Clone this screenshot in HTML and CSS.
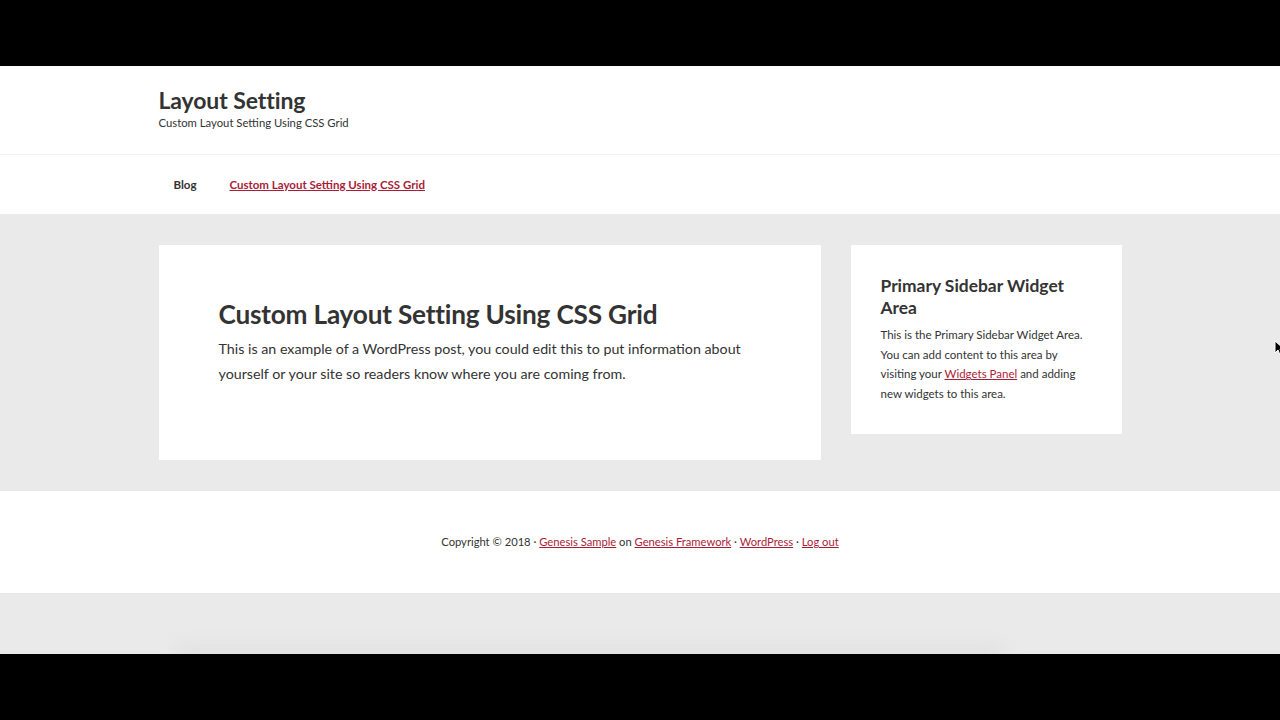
FILE: index.html
```html
<!DOCTYPE html>
<html lang="en">
<head>
<meta charset="utf-8">
<title>Layout Setting</title>
<link rel="stylesheet" href="styles.css">
</head>
<body>
<div class="video">
  <header class="site-header">
    <div class="wrap">
      <p class="site-title">Layout Setting</p>
      <p class="site-description">Custom Layout Setting Using CSS Grid</p>
    </div>
  </header>
  <nav class="nav-primary">
    <ul class="wrap menu">
      <li><a class="menu-link" href="#">Blog</a></li>
      <li><a class="menu-link current" href="#">Custom Layout Setting Using CSS Grid</a></li>
    </ul>
  </nav>
  <div class="site-inner">
    <div class="wrap content-sidebar">
      <main class="entry">
        <h1 class="entry-title">Custom Layout Setting Using CSS Grid</h1>
        <p class="entry-content">This is an example of a WordPress post, you could edit this to put information about yourself or your site so readers know where you are coming from.</p>
      </main>
      <aside class="sidebar">
        <h3 class="widget-title">Primary Sidebar Widget Area</h3>
        <p class="widget-text">This is the Primary Sidebar Widget Area. You can add content to this area by visiting your <a href="#">Widgets Panel</a> and adding new widgets to this area.</p>
      </aside>
    </div>
  </div>
  <footer class="site-footer">
    <p>Copyright © 2018 · <a href="#">Genesis Sample</a> on <a href="#">Genesis Framework</a> · <a href="#">WordPress</a> · <a href="#">Log out</a></p>
  </footer>
  <div class="below">
    <div class="shadow-band"></div>
  </div>
  <svg class="cursor" width="10" height="16" viewBox="0 0 10 16"><path d="M1 1 L1 13 L4 10 L6 15 L8 14 L6 9 L10 9 Z" fill="#000" stroke="#fff" stroke-width="1"/></svg>
</div>
</body>
</html>
```

FILE: styles.css
```css
* { box-sizing: border-box; }
html, body { margin: 0; padding: 0; }
body {
  background: #000;
  width: 1280px;
  height: 720px;
  overflow: hidden;
  font-family: "Lato", "Liberation Sans", sans-serif;
  color: #333;
}
.video {
  position: relative;
  margin-top: 66px;
  height: 588px;
  background: #eaeaea;
  display: flex;
  flex-direction: column;
  overflow: hidden;
}
.wrap {
  width: 963px;
  margin: 0 auto;
}
p { margin: 0; }
a { color: #a91d38; text-decoration: underline; }

.site-header {
  background: #fff;
  height: 89px;
  border-bottom: 1px solid #f1f1f1;
  padding-top: 22px;
}
.site-title {
  font-size: 23px;
  font-weight: 700;
  line-height: 25px;
  color: #333;
  letter-spacing: -0.1px;
}
.site-description {
  font-size: 11.3px;
  line-height: 16px;
  margin-top: 2px;
  color: #333;
}

.nav-primary {
  background: #fff;
  height: 59px;
}
.menu {
  list-style: none;
  padding: 0;
  display: flex;
  align-items: center;
  height: 59px;
  margin-top: 0;
  margin-bottom: 0;
}
.menu-link {
  display: block;
  padding: 0 16px 0 15px;
  font-size: 11.5px;
  font-weight: 700;
  color: #333;
  text-decoration: none;
  line-height: 16px;
}
.menu li + li .menu-link { padding-left: 17px; }
.menu-link.current {
  color: #a91d38;
  text-decoration: underline;
}

.site-inner {
  background: #eaeaea;
  padding: 31px 0 31px;
}
.content-sidebar {
  display: grid;
  grid-template-columns: 662px 271px;
  column-gap: 30px;
  align-items: start;
}
.entry {
  background: #fff;
  height: 215px;
  padding: 52px 60px 0;
}
.entry-title {
  margin: 0;
  font-size: 26.2px;
  font-weight: 700;
  line-height: 34px;
  color: #333;
  letter-spacing: -0.2px;
}
.entry-content {
  margin-top: 5px;
  font-size: 14.25px;
  line-height: 25px;
  color: #333;
}
.sidebar {
  background: #fff;
  height: 189px;
  padding: 30px 30px 0;
}
.widget-title {
  margin: 0;
  font-size: 17.4px;
  font-weight: 700;
  line-height: 22px;
  color: #333;
}
.widget-text {
  margin-top: 6px;
  font-size: 11.5px;
  line-height: 19.6px;
  color: #333;
}

.site-footer {
  background: #fff;
  height: 102px;
  display: flex;
  align-items: center;
  justify-content: center;
  font-size: 11.2px;
  line-height: 16px;
  color: #333;
}
.below {
  flex: 1;
  background: #eaeaea;
  border-top: 1px solid #e6e6e6;
  position: relative;
}
.shadow-band {
  position: absolute;
  left: 175px;
  width: 830px;
  bottom: -20px;
  height: 30px;
  background: #dcdcdc;
  filter: blur(10px);
  opacity: 0.6;
}
.cursor {
  position: absolute;
  left: 1274px;
  top: 274px;
}
```
